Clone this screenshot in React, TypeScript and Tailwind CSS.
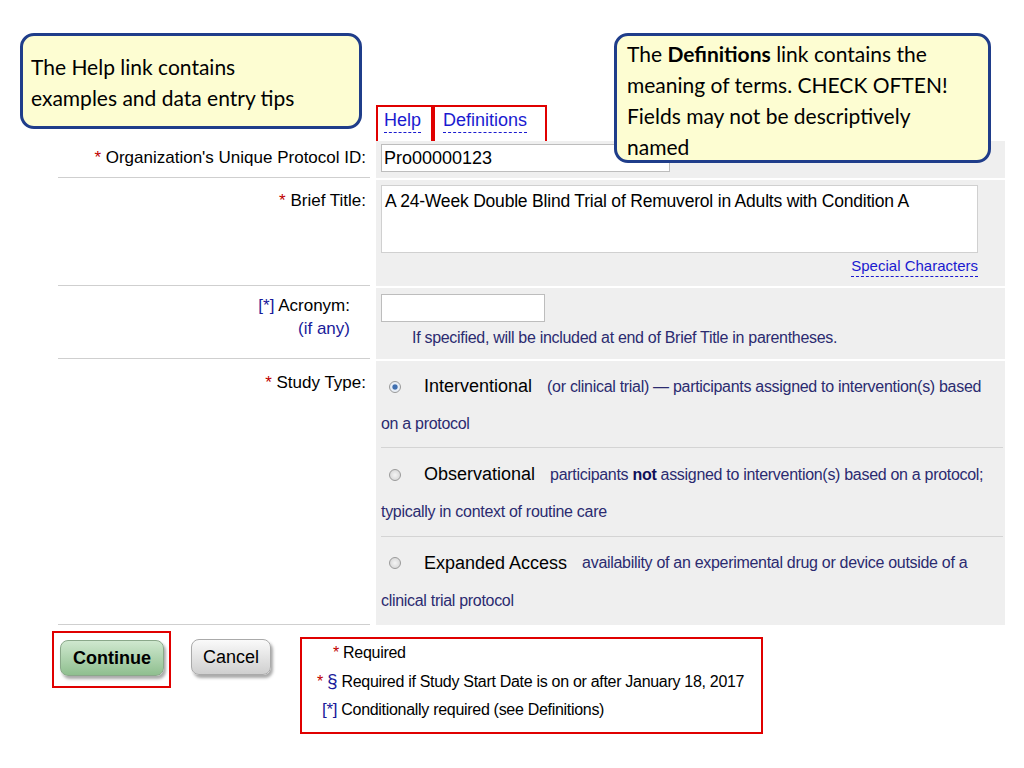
export default function App() {
  const arial = { fontFamily: '"Liberation Sans", Arial, sans-serif' };
  const desc = "text-[#2b2b70] text-[16px] tracking-[-0.3px]";
  const Radio = ({ on }: { on?: boolean }) => (
    <span className={`inline-block w-[12px] h-[12px] rounded-full border border-[#9a9a9a] ${on ? "bg-[radial-gradient(circle,#3f6fb0_30%,#e8eef6_45%)]" : "bg-[radial-gradient(circle,#f4f4f4,#d0d0d0)]"}`} />
  );
  return (
    <div className="relative w-[1024px] h-[768px] bg-white overflow-hidden text-black" style={arial}>
      <div className="pl-[58px] pt-[105px] w-[1005px]">
        <div className="flex ml-[318px] h-[44px]">
          <div className="border-2 border-[#e00000] w-[57px] h-[44px] pt-[0px] pl-[6px] text-[18px] text-[#1a1ad0]">
            <span className="border-b border-dashed border-[#1a1ad0] pb-[2px]">Help</span>
          </div>
          <div className="border-2 border-[#e00000] w-[114px] h-[45px] pt-[0px] pl-[8px] text-[18px] text-[#1a1ad0]">
            <span className="border-b border-dashed border-[#1a1ad0] pb-[2px]">Definitions</span>
          </div>
        </div>
        <div className="grid grid-cols-[312px_629px] gap-x-[6px] -mt-[8px]">
          <div className="border-b border-[#cfcfcf] h-[37px] text-right pr-[4px] pt-[4px] text-[17px]">
            <span className="text-[#c00000]">*</span> Organization's Unique Protocol ID:
          </div>
          <div className="bg-[#efefef] h-[37px] pl-[5px] pt-[3px]">
            <div className="w-[289px] h-[28px] bg-white border border-[#bdbdbd] px-[2px] text-[18px] leading-[26px]">Pro00000123</div>
          </div>
          <div className="border-b border-[#cfcfcf] h-[106px] text-right pr-[4px] pt-[8px] text-[17px] mt-[2px]">
            <span className="text-[#c00000]">*</span> Brief Title:
          </div>
          <div className="bg-[#efefef] h-[106px] pl-[5px] pt-[5px] mt-[2px] flex flex-col">
            <div className="w-[597px] h-[68px] bg-white border border-[#d0d0d0] px-[3px] pt-[2px] text-[17.5px] tracking-[-0.2px]">
              A 24-Week Double Blind Trial of Remuverol in Adults with Condition A
            </div>
            <div className="w-[597px] text-right mt-[2px] text-[15px] text-[#1a1ad0]">
              <span className="border-b border-dashed border-[#1a1ad0] pb-[2px]">Special Characters</span>
            </div>
          </div>
          <div className="border-b border-[#cfcfcf] h-[71px] text-right pr-[20px] pt-[6px] text-[17px] leading-[23px] mt-[2px]">
            <div><span className="text-[#1a1a9a]">[*]</span> Acronym:</div>
            <div className="text-[#1a1a9a]">(if any)</div>
          </div>
          <div className="bg-[#efefef] h-[71px] pl-[5px] pt-[6px] mt-[2px]">
            <div className="w-[164px] h-[28px] bg-white border border-[#bdbdbd]" />
            <div className={`${desc} ml-[31px] mt-[4px]`}>If specified, will be included at end of Brief Title in parentheses.</div>
          </div>
          <div className="border-b border-[#cfcfcf] h-[264px] text-right pr-[4px] pt-[9px] text-[17px] mt-[2px]">
            <span className="text-[#c00000]">*</span> Study Type:
          </div>
          <div className="bg-[#efefef] h-[264px] pl-[5px] pr-[2px] mt-[2px] flex flex-col">
            {[
              { on: true, t: "Interventional", d: <>(or clinical trial) — participants assigned to intervention(s) based</>, d2: "on a protocol" },
              { t: "Observational", d: <>participants <b className="text-[#10105a]">not</b> assigned to intervention(s) based on a protocol;</>, d2: "typically in context of routine care" },
              { t: "Expanded Access", d: <>availability of an experimental drug or device outside of a</>, d2: "clinical trial protocol" },
            ].map((r, i) => (
              <div key={i} className={`h-[88px] ${i < 2 ? "border-b border-[#d4d4d4]" : ""} ${i > 0 ? "mt-[1px]" : ""} pt-[12px]`}>
                <div className="flex items-center whitespace-nowrap">
                  <span className="ml-[8px] mr-[23px] flex"><Radio on={r.on} /></span>
                  <span className="text-[18px] mr-[15px]">{r.t}</span>
                  <span className={desc}>{r.d}</span>
                </div>
                <div className={`${desc} mt-[12px]`}>{r.d2}</div>
              </div>
            ))}
          </div>
        </div>
        <div className="flex items-start mt-[6px] -ml-[6px]">
          <div className="border-2 border-[#e00000] w-[119px] h-[57px] pl-[6px] pt-[7px]">
            <div className="w-[104px] h-[36px] rounded-[8px] border border-[#8aa88a] bg-gradient-to-b from-[#cfe8cf] to-[#8fbf8f] shadow-[2px_3px_3px_#aaa] flex items-center justify-center font-bold text-[18px]">Continue</div>
          </div>
          <div className="ml-[20px] mt-[8px] w-[80px] h-[36px] rounded-[8px] border border-[#aaa] bg-gradient-to-b from-[#fafafa] to-[#cfcfcf] shadow-[2px_3px_3px_#aaa] flex items-center justify-center text-[18px]">Cancel</div>
          <div className="ml-[29px] mt-[6px] border-2 border-[#e00000] w-[463px] h-[97px] text-[16px] tracking-[-0.3px] leading-[28px] pt-[0px]">
            <div className="pl-[31px]"><span className="text-[#c00000]">*</span> Required</div>
            <div className="pl-[15px]"><span className="text-[#c00000]">*</span> <span className="text-[#1a1a9a] text-[19px]">§</span> Required if Study Start Date is on or after January 18, 2017</div>
            <div className="pl-[20px]"><span className="text-[#1a1a9a] text-[17px]">[*]</span> Conditionally required (see Definitions)</div>
          </div>
        </div>
      </div>

      <div className="absolute left-[20px] top-[33px] w-[342px] h-[96px] rounded-[14px] border-[3px] border-[#1f3d8a] bg-[#fdfdd2] px-[8px] pt-[15px] text-[21px] leading-[31px]" style={{ fontFamily: "Lato, 'Open Sans', sans-serif" }}>
        The Help link contains<br />examples and data entry tips
      </div>
      <div className="absolute left-[614px] top-[33px] w-[377px] h-[130px] rounded-[14px] border-[3px] border-[#1f3d8a] bg-[#fdfdd2] px-[10px] pt-[2px] text-[21px] leading-[31px] whitespace-nowrap" style={{ fontFamily: "Lato, 'Open Sans', sans-serif" }}>
        The <b>Definitions</b> link contains the<br />meaning of terms. CHECK OFTEN!<br />Fields may not be descriptively<br />named
      </div>
    </div>
  );
}
